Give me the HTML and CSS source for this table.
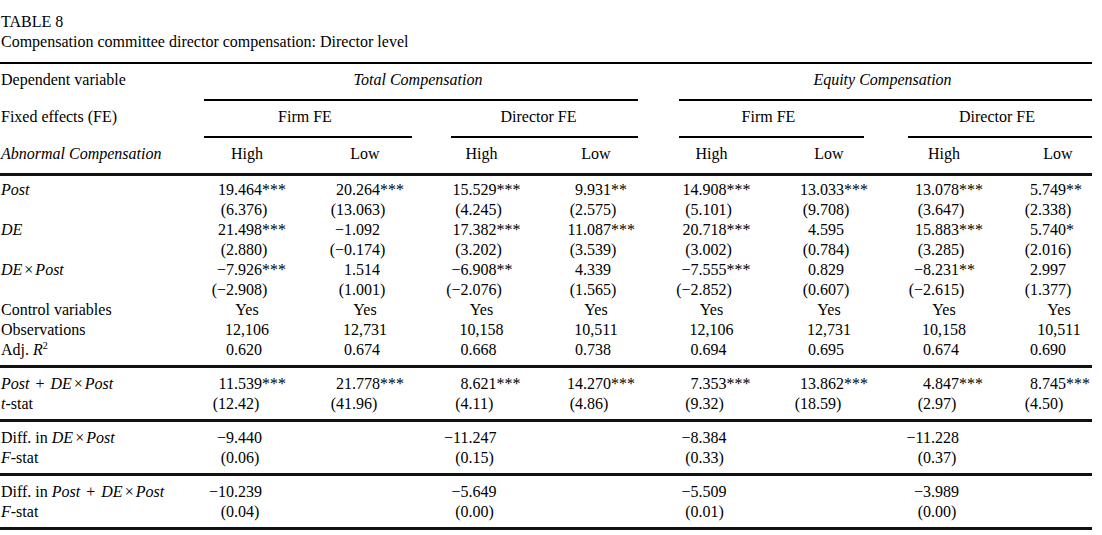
FILE: index.html
```html
<!DOCTYPE html>
<html lang="en">
<head>
<meta charset="utf-8">
<title>Table 8</title>
<link rel="stylesheet" href="styles.css">
</head>
<body>
<div class="title">TABLE 8<br>Compensation committee director compensation: Director level</div>
<div class="tbl">
  <div class="rule top"></div>

  <div class="hl">Dependent variable</div>
  <div class="hs span4 tot"><i>Total Compensation</i></div>
  <div class="hs span4 eq"><i>Equity Compensation</i></div>

  <div class="hl">Fixed effects (FE)</div>
  <div class="hs span2 ft">Firm FE</div>
  <div class="hs span2 dt">Director FE</div>
  <div class="hs span2 fe">Firm FE</div>
  <div class="hs span2 de">Director FE</div>

  <div class="hl3"><i>Abnormal Compensation</i></div>
  <div class="h">High</div><div class="h">Low</div>
  <div class="h">High</div><div class="h">Low</div>
  <div class="h">High</div><div class="h">Low</div>
  <div class="h">High</div><div class="h last">Low</div>

  <div class="rule hd"></div>

  <div class="l"><i>Post</i></div>
  <div class="n"><span>19</span><span>.464***</span></div>
  <div class="n"><span>20</span><span>.264***</span></div>
  <div class="n"><span>15</span><span>.529***</span></div>
  <div class="n"><span>9</span><span>.931**</span></div>
  <div class="n"><span>14</span><span>.908***</span></div>
  <div class="n"><span>13</span><span>.033***</span></div>
  <div class="n"><span>13</span><span>.078***</span></div>
  <div class="n"><span>5</span><span>.749**</span></div>

  <div class="l"></div>
  <div class="n"><span>(6</span><span>.376)</span></div>
  <div class="n"><span>(13</span><span>.063)</span></div>
  <div class="n"><span>(4</span><span>.245)</span></div>
  <div class="n"><span>(2</span><span>.575)</span></div>
  <div class="n"><span>(5</span><span>.101)</span></div>
  <div class="n"><span>(9</span><span>.708)</span></div>
  <div class="n"><span>(3</span><span>.647)</span></div>
  <div class="n"><span>(2</span><span>.338)</span></div>

  <div class="l"><i>DE</i></div>
  <div class="n"><span>21</span><span>.498***</span></div>
  <div class="n"><span>&minus;1</span><span>.092</span></div>
  <div class="n"><span>17</span><span>.382***</span></div>
  <div class="n"><span>11</span><span>.087***</span></div>
  <div class="n"><span>20</span><span>.718***</span></div>
  <div class="n"><span>4</span><span>.595</span></div>
  <div class="n"><span>15</span><span>.883***</span></div>
  <div class="n"><span>5</span><span>.740*</span></div>

  <div class="l"></div>
  <div class="n"><span>(2</span><span>.880)</span></div>
  <div class="n"><span>(&minus;0</span><span>.174)</span></div>
  <div class="n"><span>(3</span><span>.202)</span></div>
  <div class="n"><span>(3</span><span>.539)</span></div>
  <div class="n"><span>(3</span><span>.002)</span></div>
  <div class="n"><span>(0</span><span>.784)</span></div>
  <div class="n"><span>(3</span><span>.285)</span></div>
  <div class="n"><span>(2</span><span>.016)</span></div>

  <div class="l"><i>DE</i><span class="x">&times;</span><i>Post</i></div>
  <div class="n"><span>&minus;7</span><span>.926***</span></div>
  <div class="n"><span>1</span><span>.514</span></div>
  <div class="n"><span>&minus;6</span><span>.908**</span></div>
  <div class="n"><span>4</span><span>.339</span></div>
  <div class="n"><span>&minus;7</span><span>.555***</span></div>
  <div class="n"><span>0</span><span>.829</span></div>
  <div class="n"><span>&minus;8</span><span>.231**</span></div>
  <div class="n"><span>2</span><span>.997</span></div>

  <div class="l"></div>
  <div class="n"><span>(&minus;2</span><span>.908)</span></div>
  <div class="n"><span>(1</span><span>.001)</span></div>
  <div class="n"><span>(&minus;2</span><span>.076)</span></div>
  <div class="n"><span>(1</span><span>.565)</span></div>
  <div class="n"><span>(&minus;2</span><span>.852)</span></div>
  <div class="n"><span>(0</span><span>.607)</span></div>
  <div class="n"><span>(&minus;2</span><span>.615)</span></div>
  <div class="n"><span>(1</span><span>.377)</span></div>

  <div class="l">Control variables</div>
  <div class="c">Yes</div><div class="c">Yes</div><div class="c">Yes</div><div class="c">Yes</div>
  <div class="c">Yes</div><div class="c">Yes</div><div class="c">Yes</div><div class="c last">Yes</div>

  <div class="l">Observations</div>
  <div class="c">12,106</div><div class="c">12,731</div><div class="c">10,158</div><div class="c">10,511</div>
  <div class="c">12,106</div><div class="c">12,731</div><div class="c">10,158</div><div class="c last">10,511</div>

  <div class="l">Adj. <i>R</i><sup>2</sup></div>
  <div class="n"><span>0</span><span>.620</span></div>
  <div class="n"><span>0</span><span>.674</span></div>
  <div class="n"><span>0</span><span>.668</span></div>
  <div class="n"><span>0</span><span>.738</span></div>
  <div class="n"><span>0</span><span>.694</span></div>
  <div class="n"><span>0</span><span>.695</span></div>
  <div class="n"><span>0</span><span>.674</span></div>
  <div class="n"><span>0</span><span>.690</span></div>

  <div class="rule"></div>

  <div class="l"><i>Post</i><span class="p">+</span><i>DE</i><span class="x">&times;</span><i>Post</i></div>
  <div class="n"><span>11</span><span>.539***</span></div>
  <div class="n"><span>21</span><span>.778***</span></div>
  <div class="n"><span>8</span><span>.621***</span></div>
  <div class="n"><span>14</span><span>.270***</span></div>
  <div class="n"><span>7</span><span>.353***</span></div>
  <div class="n"><span>13</span><span>.862***</span></div>
  <div class="n"><span>4</span><span>.847***</span></div>
  <div class="n"><span>8</span><span>.745***</span></div>

  <div class="l"><i>t</i>-stat</div>
  <div class="n"><span>(12</span><span>.42)</span></div>
  <div class="n"><span>(41</span><span>.96)</span></div>
  <div class="n"><span>(4</span><span>.11)</span></div>
  <div class="n"><span>(4</span><span>.86)</span></div>
  <div class="n"><span>(9</span><span>.32)</span></div>
  <div class="n"><span>(18</span><span>.59)</span></div>
  <div class="n"><span>(2</span><span>.97)</span></div>
  <div class="n"><span>(4</span><span>.50)</span></div>

  <div class="rule"></div>

  <div class="l">Diff. in <i>DE</i><span class="x">&times;</span><i>Post</i></div>
  <div class="n"><span>&minus;9</span><span>.440</span></div><div></div>
  <div class="n"><span>&minus;11</span><span>.247</span></div><div></div>
  <div class="n"><span>&minus;8</span><span>.384</span></div><div></div>
  <div class="n"><span>&minus;11</span><span>.228</span></div><div></div>

  <div class="l"><i>F</i>-stat</div>
  <div class="n"><span>(0</span><span>.06)</span></div><div></div>
  <div class="n"><span>(0</span><span>.15)</span></div><div></div>
  <div class="n"><span>(0</span><span>.33)</span></div><div></div>
  <div class="n"><span>(0</span><span>.37)</span></div><div></div>

  <div class="rule"></div>

  <div class="l">Diff. in <i>Post</i><span class="p">+</span><i>DE</i><span class="x">&times;</span><i>Post</i></div>
  <div class="n"><span>&minus;10</span><span>.239</span></div><div></div>
  <div class="n"><span>&minus;5</span><span>.649</span></div><div></div>
  <div class="n"><span>&minus;5</span><span>.509</span></div><div></div>
  <div class="n"><span>&minus;3</span><span>.989</span></div><div></div>

  <div class="l"><i>F</i>-stat</div>
  <div class="n"><span>(0</span><span>.04)</span></div><div></div>
  <div class="n"><span>(0</span><span>.00)</span></div><div></div>
  <div class="n"><span>(0</span><span>.01)</span></div><div></div>
  <div class="n"><span>(0</span><span>.00)</span></div><div></div>

  <div class="rule end"></div>
</div>
</body>
</html>
```

FILE: styles.css
```css
* {
  box-sizing: border-box;
}

html, body {
  margin: 0;
  padding: 0;
  background: #ffffff;
}

body {
  width: 1102px;
  color: #000000;
  font-family: "Liberation Serif", "Times New Roman", serif;
  font-size: 16px;
  line-height: 20px;
}

.title {
  padding: 12px 0 0 1px;
}

.tbl {
  display: grid;
  grid-template-columns: 188px 118px 118px 115px 114px 117px 118px 112px 102px;
  margin-top: 10px;
}

/* horizontal rules */
.rule {
  grid-column: 1 / -1;
  height: 3px;
  background: #111111;
  margin: 5px 10px 6px 0;
}

.rule.top {
  height: 2px;
  background: #000000;
  margin: 0 10px 0 0;
}

.rule.hd {
  margin: 0 10px 4px 0;
}

.rule.end {
  margin: 5px 10px 0 0;
}

/* header rows */
.hl,
.hs {
  padding: 6px 0 9px;
  border-bottom: 2px solid transparent;
  white-space: nowrap;
}

.hl {
  padding-left: 1px;
}

.hs {
  border-bottom-color: #000000;
  text-align: center;
  padding-right: 6px;
}

.span4 {
  grid-column: span 4;
}

.span2 {
  grid-column: span 2;
}

.tot { margin: 0 15px 0 16px; }
.eq  { margin: 0 10px 0 26px; }
.ft  { margin: 0 12px 0 16px; }
.dt  { margin: 0 15px 0 27px; padding-right: 12px; }
.fe  { margin: 0 24px 0 26px; }
.de  { margin: 0 10px 0 20px; }

.hl3,
.h {
  padding: 6px 0 9px;
  white-space: nowrap;
}

.hl3 {
  padding-left: 1px;
}

.h {
  text-align: center;
}

.h.last {
  padding-left: 14px;
}

/* body cells */
.l {
  padding-left: 1px;
  white-space: nowrap;
}

.l .x {
  padding: 0 2px;
}

.l .p {
  padding: 0 6px;
}

.l sup {
  font-size: 10px;
  line-height: 0;
  vertical-align: 6px;
}

.n {
  display: flex;
  justify-content: center;
  white-space: nowrap;
}

.n span {
  display: inline-block;
}

.n span:first-child {
  width: 26px;
  text-align: right;
}

.n span:last-child {
  width: 52px;
  text-align: left;
}

.c {
  text-align: center;
  white-space: nowrap;
}

.c.last {
  padding-left: 16px;
}
```
